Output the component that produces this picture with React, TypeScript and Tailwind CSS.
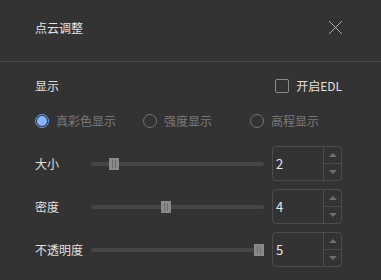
import React from "react";

const font = { fontFamily: '"Noto Sans CJK SC", "Noto Sans", sans-serif' };

function Radio({ label, checked }: { label: string; checked?: boolean }) {
  return (
    <div className="flex items-center gap-[7px]">
      {checked ? (
        <span className="flex h-[14px] w-[14px] items-center justify-center rounded-full border border-[#6a9ff0]">
          <span className="h-[10px] w-[10px] rounded-full bg-[#86b4ff]" />
        </span>
      ) : (
        <span className="h-[14px] w-[14px] rounded-full border border-[#747474]" />
      )}
      <span className="text-[12px] text-[#7a7a7a]">{label}</span>
    </div>
  );
}

function Spin({ value }: { value: number }) {
  return (
    <div className="flex h-[35px] w-[70px] rounded-[4px] border border-[#4c4c4c]">
      <div className="flex flex-1 items-center pl-[3px] text-[13px] text-[#e8e8e8]">
        {value}
      </div>
      <div className="flex w-[18px] flex-col border-l border-[#4c4c4c]">
        <div className="flex flex-1 items-center justify-center border-b border-[#4c4c4c]">
          <span className="h-0 w-0 border-x-[4px] border-b-[4px] border-x-transparent border-b-[#6e6e6e]" />
        </div>
        <div className="flex flex-1 items-center justify-center">
          <span className="h-0 w-0 border-x-[4px] border-t-[4px] border-x-transparent border-t-[#6e6e6e]" />
        </div>
      </div>
    </div>
  );
}

function SliderRow({ label, value, pos }: { label: string; value: number; pos: number }) {
  return (
    <div className="flex h-[35px] items-center">
      <span className="w-[56px] text-[12px] text-[#e0e0e0]">{label}</span>
      <div className="relative mr-[8px] h-[4px] flex-1 rounded-full bg-[#464646]">
        <div
          className="absolute top-[-4px] flex h-[12px] w-[10px] justify-center gap-[2px] bg-[#8a8a8a] pt-[2px]"
          style={{ left: pos }}
        >
          <span className="h-[8px] w-px bg-[#6c6c6c]" />
          <span className="h-[8px] w-px bg-[#6c6c6c]" />
        </div>
      </div>
      <Spin value={value} />
    </div>
  );
}

export default function App() {
  return (
    <div className="h-[280px] w-[381px] overflow-hidden bg-[#333333]" style={font}>
      <div className="flex h-[62px] items-center justify-between border-b border-[#474747] pb-[6px] pl-[35px] pr-[39px]">
        <span className="text-[12px] text-[#e6e6e6]">点云调整</span>
        <svg width="15" height="15" viewBox="0 0 15 15" className="mr-[-1px]">
          <path d="M1 1L14 14M14 1L1 14" stroke="#b0b0b0" strokeWidth="1" />
        </svg>
      </div>
      <div className="pl-[35px] pr-[39px]">
        <div className="mt-[14px] flex h-[20px] items-center justify-between">
          <span className="text-[12px] text-[#e0e0e0]">显示</span>
          <div className="flex items-center gap-[7px]">
            <span className="h-[14px] w-[14px] rounded-[2px] border border-[#8a8a8a]" />
            <span className="text-[12px] text-[#e0e0e0]">开启EDL</span>
          </div>
        </div>
        <div className="mt-[15px] flex h-[20px] items-center">
          <div className="w-[108px]">
            <Radio label="真彩色显示" checked />
          </div>
          <div className="w-[107px]">
            <Radio label="强度显示" />
          </div>
          <Radio label="高程显示" />
        </div>
        <div className="mt-[15px] flex flex-col gap-[8px]">
          <SliderRow label="大小" value={2} pos={18} />
          <SliderRow label="密度" value={4} pos={70} />
          <SliderRow label="不透明度" value={5} pos={163} />
        </div>
      </div>
    </div>
  );
}
